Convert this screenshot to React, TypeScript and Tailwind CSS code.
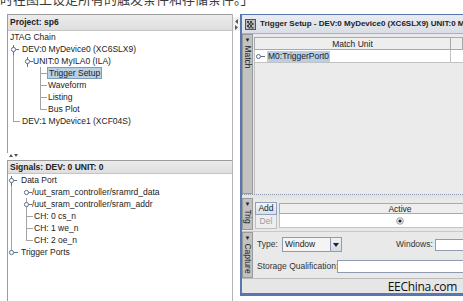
import React from 'react'

type Handle = { x: number; open: boolean }

interface TreeRowProps {
  text: string
  textX: number
  guides?: number[]
  half?: number[]
  hline?: [number, number]
  handle?: Handle
  selected?: boolean
}

// one tree row, 12px high, connectors drawn in a small svg in front of the label
function TreeRow({ text, textX, guides = [], half = [], hline, handle, selected }: TreeRowProps) {
  return (
    <div className="flex h-[12px] items-center whitespace-nowrap">
      <svg width={textX} height={12} className="shrink-0">
        {guides.map((g) => (
          <line key={'g' + g} x1={g + 0.5} y1={0} x2={g + 0.5} y2={12} stroke="#a4a4a4" strokeWidth={1} />
        ))}
        {half.map((g) => (
          <line key={'h' + g} x1={g + 0.5} y1={0} x2={g + 0.5} y2={6.5} stroke="#a4a4a4" strokeWidth={1} />
        ))}
        {hline && <line x1={hline[0]} y1={6.5} x2={hline[1]} y2={6.5} stroke="#a4a4a4" strokeWidth={1} />}
        {handle && handle.open && (
          <>
            <line x1={handle.x + 0.5} y1={2} x2={handle.x + 0.5} y2={12} stroke="#5d6f92" strokeWidth={1} />
            <line x1={handle.x + 2.5} y1={6.5} x2={handle.x + 6} y2={6.5} stroke="#5d6f92" strokeWidth={1} />
            <circle cx={handle.x + 0.5} cy={6.5} r={2.1} fill="#fff" stroke="#5d6f92" strokeWidth={1} />
          </>
        )}
        {handle && !handle.open && (
          <>
            <line x1={handle.x + 2.5} y1={6.5} x2={handle.x + 7} y2={6.5} stroke="#5d6f92" strokeWidth={1} />
            <circle cx={handle.x + 0.5} cy={6.5} r={2.1} fill="#fff" stroke="#5d6f92" strokeWidth={1} />
          </>
        )}
      </svg>
      <span className={selected ? 'bg-[#b8cfe5] border border-[#7f9db9] px-[1px] leading-[10px] -ml-[1px]' : ''}>{text}</span>
    </div>
  )
}

function PanelHeader({ title, h }: { title: string; h: string }) {
  return (
    <div className={`${h} flex items-center px-[2px] bg-gradient-to-b from-[#ececec] to-[#dedede] border-b border-[#c4c4c4] font-bold text-[#222]`}>
      {title}
    </div>
  )
}

function VTab({ label, h }: { label: string; h: string }) {
  return (
    <div className={`${h} w-[11px] shrink-0 bg-[#c2c2c2] border border-[#9a9a9a] flex flex-col items-center pt-[2px]`}>
      <span className="[writing-mode:vertical-rl] text-[8.5px] leading-[10px] text-[#222] whitespace-nowrap">
        <span className="text-[6px]">▼</span> {label}
      </span>
    </div>
  )
}

function TitleIcon() {
  return (
    <svg width={11} height={11} viewBox="0 0 11 11" className="shrink-0">
      <rect x={0.5} y={0.5} width={10} height={10} fill="#bdbdbd" stroke="#555" />
      <path d="M2 2h2v2H2zM5 2h2v2H5zM3.5 4h2v2h-2zM6.5 4h2v2h-2zM2 6h2v2H2zM5 6h2v2H5zM3.5 8h2v1.5h-2zM6.5 8h2v1.5h-2z" fill="#444" />
    </svg>
  )
}

const dotted = 'bg-[radial-gradient(#8e99ad_0.6px,transparent_0.7px)] bg-[size:2px_2px]'

export default function App() {
  return (
    <div className="w-[463px] h-[301px] overflow-hidden bg-white font-['Liberation_Sans',Arial,sans-serif] text-[8.5px] text-[#222]">
      {/* clipped caption line from the article above */}
      <div className="h-[14px] overflow-hidden">
        <div className="h-[6px] overflow-hidden">
          <div className="-mt-[9px] text-[13px] leading-[16px] text-[#3a3a3a] whitespace-nowrap font-['Noto_Sans_CJK_SC',sans-serif]">
            时在图上设定所有的触发条件和存储条件。」
          </div>
        </div>
      </div>

      <div className="flex h-[287px]">
        <div className="w-[7px] shrink-0" />

        {/* left: project tree + signals */}
        <div className="w-[225px] shrink-0 flex flex-col">
          <div className="h-[139px] bg-white border-t border-l border-[#9c9c9c] overflow-hidden">
            <PanelHeader title="Project: sp6" h="h-[16px]" />
            <TreeRow text="JTAG Chain" textX={2} />
            <TreeRow text="DEV:0 MyDevice0 (XC6SLX9)" textX={14} handle={{ x: 5, open: true }} />
            <TreeRow text="UNIT:0 MyILA0 (ILA)" textX={25} guides={[5]} handle={{ x: 19, open: true }} />
            <TreeRow text="Trigger Setup" textX={40} guides={[5, 32]} hline={[32, 39]} selected />
            <TreeRow text="Waveform" textX={40} guides={[5, 32]} hline={[32, 39]} />
            <TreeRow text="Listing" textX={40} guides={[5, 32]} hline={[32, 39]} />
            <TreeRow text="Bus Plot" textX={40} guides={[5]} half={[32]} hline={[32, 39]} />
            <TreeRow text="DEV:1 MyDevice1 (XCF04S)" textX={14} half={[5]} hline={[5, 12]} />
          </div>

          <div className={`h-[7px] flex items-start pl-[1px] ${dotted}`}>
            <svg width={10} height={5} className="bg-white">
              <path d="M1 4L3 1L5 4Z" fill="#556" />
              <path d="M6 1L8 4L10 1Z" fill="#556" />
            </svg>
          </div>

          <div className="flex-1 bg-white border-t border-l border-[#9c9c9c] overflow-hidden">
            <PanelHeader title="Signals: DEV: 0 UNIT: 0" h="h-[13px]" />
            <TreeRow text="Data Port" textX={13} handle={{ x: 3, open: true }} />
            <TreeRow text="/uut_sram_controller/sramrd_data" textX={24} guides={[3]} handle={{ x: 18, open: false }} />
            <TreeRow text="/uut_sram_controller/sram_addr" textX={24} guides={[3, 18]} handle={{ x: 18, open: false }} />
            <TreeRow text="CH: 0 cs_n" textX={26} guides={[3, 18]} hline={[18, 25]} />
            <TreeRow text="CH: 1 we_n" textX={26} guides={[3, 18]} hline={[18, 25]} />
            <TreeRow text="CH: 2 oe_n" textX={26} guides={[3]} half={[18]} hline={[18, 25]} />
            <TreeRow text="Trigger Ports" textX={13} half={[3]} handle={{ x: 3, open: false }} />
          </div>
        </div>

        {/* split pane divider */}
        <div className={`w-[8px] shrink-0 flex flex-col border-l border-[#b4b4b4] ${dotted}`}>
          <svg width={7} height={14} className="mt-[3px] bg-[#f2f2f2]">
            <path d="M5 2L2 4.5L5 7Z" fill="#556" />
            <path d="M2 8L5 10.5L2 13Z" fill="#556" />
          </svg>
        </div>

        {/* right: trigger setup window */}
        <div className="w-[223px] h-[282px] shrink-0 flex flex-col overflow-hidden border-l-[2px] border-t border-b-[3px] border-[#5a76ae] bg-[#e9e9e9]">
          <div className="h-[19px] shrink-0 flex items-center gap-[4px] pl-[3px] bg-gradient-to-b from-[#e9ecf1] to-[#d9dde5] border-b border-[#a9b1bf] font-bold text-[8px] whitespace-nowrap">
            <TitleIcon />
            <span>Trigger Setup - DEV:0 MyDevice0 (XC6SLX9) UNIT:0 MyILA0 (ILA)</span>
          </div>

          {/* Match */}
          <div className="h-[160px] shrink-0 flex">
            <VTab label="Match" h="h-[160px]" />
            <div className="flex-1 flex flex-col pt-[3px] pl-[1px]">
              <div className="h-[13px] flex bg-[#eeeeee] border border-[#a9a9a9]">
                <div className="w-[196px] shrink-0 text-center leading-[12px] border-r border-[#a9a9a9]">Match Unit</div>
              </div>
              <div className="h-[13px] flex bg-white border-b border-l border-[#c2c2c2]">
                <div className="w-[196px] shrink-0 flex items-center border-r border-[#c2c2c2]">
                  <svg width={12} height={12} className="shrink-0">
                    <line x1={5} y1={6.5} x2={10} y2={6.5} stroke="#5d6f92" />
                    <circle cx={3.5} cy={6.5} r={2} fill="#fff" stroke="#5d6f92" />
                  </svg>
                  <span className="bg-[#b8cfe5] px-[1px] leading-[11px]">M0:TriggerPort0</span>
                </div>
              </div>
              <div className="flex-1 bg-[#ebebeb] border-l border-[#c2c2c2]" />
            </div>
          </div>

          <div className="h-[4px] shrink-0 border-t border-dotted border-[#8e99ad] bg-[#e4e4e4]" />

          {/* Trig */}
          <div className="h-[33px] shrink-0 flex">
            <VTab label="Trig" h="h-[32px]" />
            <div className="flex-1 flex pt-[4px] pl-[2px]">
              <div className="w-[22px] shrink-0 flex flex-col">
                <div className="h-[13px] flex items-center justify-center bg-gradient-to-b from-[#f2f6fb] to-[#d4e0ee] border border-[#8ea2bf] text-[#222]">Add</div>
                <div className="h-[14px] flex items-center justify-center bg-[#eeeeee] border border-t-0 border-[#c0c0c0] text-[#9a9a9a]">Del</div>
              </div>
              <div className="flex-1 flex flex-col ml-[2px] pt-[1px]">
                <div className="h-[11px] flex bg-[#eeeeee] border border-[#a9a9a9]">
                  <div className="w-[240px] shrink-0 text-center leading-[10px]">Active</div>
                </div>
                <div className="h-[14px] flex bg-white border-b border-l border-[#c2c2c2]">
                  <div className="w-[240px] shrink-0 flex items-center justify-center">
                    <svg width={8} height={8}>
                      <circle cx={4} cy={4} r={3.3} fill="#f4f4f4" stroke="#7d8797" strokeWidth={0.8} />
                      <circle cx={4} cy={4} r={1.6} fill="#222" />
                    </svg>
                  </div>
                </div>
              </div>
            </div>
          </div>

          {/* Capture */}
          <div className="h-[47px] shrink-0 flex border-t border-[#c8c8c8]">
            <VTab label="Capture" h="h-[46px]" />
            <div className="flex-1 flex flex-col pt-[5px] pl-[4px] whitespace-nowrap">
              <div className="h-[15px] flex items-center">
                <span className="w-[25px] shrink-0 text-[#333]">Type:</span>
                <div className="w-[49px] h-[15px] shrink-0 flex items-center pl-[2px] bg-[#f4f4f4] border border-[#8e9bb0]">Window</div>
                <div className="w-[11px] h-[15px] shrink-0 flex items-center justify-center bg-gradient-to-b from-[#f0f3f8] to-[#d3dbe6] border border-l-0 border-[#8e9bb0]">
                  <svg width={6} height={4}>
                    <path d="M0 0H6L3 4Z" fill="#222" />
                  </svg>
                </div>
                <span className="ml-[54px] w-[39px] shrink-0 text-[#333]">Windows:</span>
                <div className="w-[40px] h-[12px] shrink-0 bg-white border border-[#8e9bb0]" />
              </div>
              <div className="h-[13px] mt-[8px] flex items-center">
                <span className="w-[80px] shrink-0 text-[#333]">Storage Qualification:</span>
                <div className="w-[140px] h-[13px] shrink-0 bg-white border border-[#8e9bb0]" />
              </div>
            </div>
          </div>

          {/* status strip */}
          <div className="flex-1 flex items-center justify-end pr-[6px] bg-[#e6e6e6] border-t border-[#bcbcbc]">
            <span className="text-[12px] leading-[13px] text-[#111] font-['Open_Sans',sans-serif] tracking-[-0.3px]">EEChina.com</span>
          </div>
        </div>
      </div>
    </div>
  )
}
